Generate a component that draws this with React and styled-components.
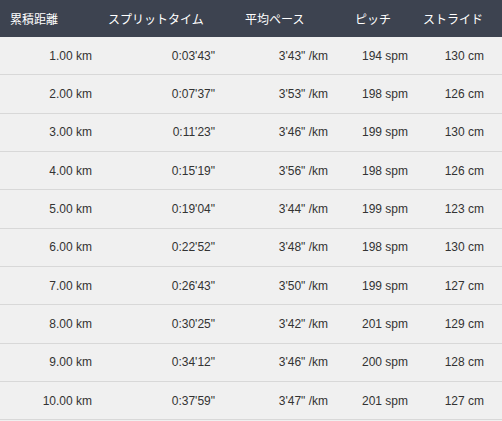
import React from "react";
import styled, { createGlobalStyle } from "styled-components";

const Global = createGlobalStyle`
  html, body { margin: 0; padding: 0; background: #f0f0f0; }
  body { font-family: "Liberation Sans", Arial, "Noto Sans CJK JP", sans-serif; }
`;

const columns = [
  { key: "dist", label: "累積距離", width: 100, headPad: 10, bodyPad: 8 },
  { key: "split", label: "スプリットタイム", width: 137, headPad: 8, bodyPad: 22 },
  { key: "pace", label: "平均ペース", width: 110, headPad: 8, bodyPad: 19 },
  { key: "pitch", label: "ピッチ", width: 68, headPad: 8, bodyPad: 7 },
  { key: "stride", label: "ストライド", width: 87, headPad: 8, bodyPad: 18 },
];

const rows = [
  ["1.00 km", "0:03'43\"", "3'43\" /km", "194 spm", "130 cm"],
  ["2.00 km", "0:07'37\"", "3'53\" /km", "198 spm", "126 cm"],
  ["3.00 km", "0:11'23\"", "3'46\" /km", "199 spm", "130 cm"],
  ["4.00 km", "0:15'19\"", "3'56\" /km", "198 spm", "126 cm"],
  ["5.00 km", "0:19'04\"", "3'44\" /km", "199 spm", "123 cm"],
  ["6.00 km", "0:22'52\"", "3'48\" /km", "198 spm", "130 cm"],
  ["7.00 km", "0:26'43\"", "3'50\" /km", "199 spm", "127 cm"],
  ["8.00 km", "0:30'25\"", "3'42\" /km", "201 spm", "129 cm"],
  ["9.00 km", "0:34'12\"", "3'46\" /km", "200 spm", "128 cm"],
  ["10.00 km", "0:37'59\"", "3'47\" /km", "201 spm", "127 cm"],
];

const Table = styled.div`
  width: 502px;
  display: grid;
  grid-template-columns: ${columns.map((c) => `${c.width}px`).join(" ")};
  grid-template-rows: 37px;
  grid-auto-rows: 38.333px;
  background: #f0f0f0;
`;

const HeadCell = styled.div`
  background: #3d4350;
  color: #ffffff;
  font-family: "Noto Sans CJK JP", "Liberation Sans", sans-serif;
  font-size: 12px;
  display: flex;
  align-items: center;
  justify-content: flex-start;
  padding-left: ${(p) => p.$pad}px;
  letter-spacing: 0;
`;

const BodyCell = styled.div`
  box-sizing: border-box;
  border-bottom: 1px solid #d8d8d8;
  color: #333333;
  font-size: 12px;
  display: flex;
  align-items: center;
  justify-content: flex-end;
  padding-right: ${(p) => p.$pad}px;
  white-space: nowrap;
`;

export default function App() {
  return (
    <>
      <Global />
      <Table>
        {columns.map((c) => (
          <HeadCell key={c.key} $pad={c.headPad}>
            {c.label}
          </HeadCell>
        ))}
        {rows.map((r, i) =>
          r.map((v, j) => (
            <BodyCell key={`${i}-${j}`} $pad={columns[j].bodyPad}>
              {v}
            </BodyCell>
          ))
        )}
      </Table>
    </>
  );
}
